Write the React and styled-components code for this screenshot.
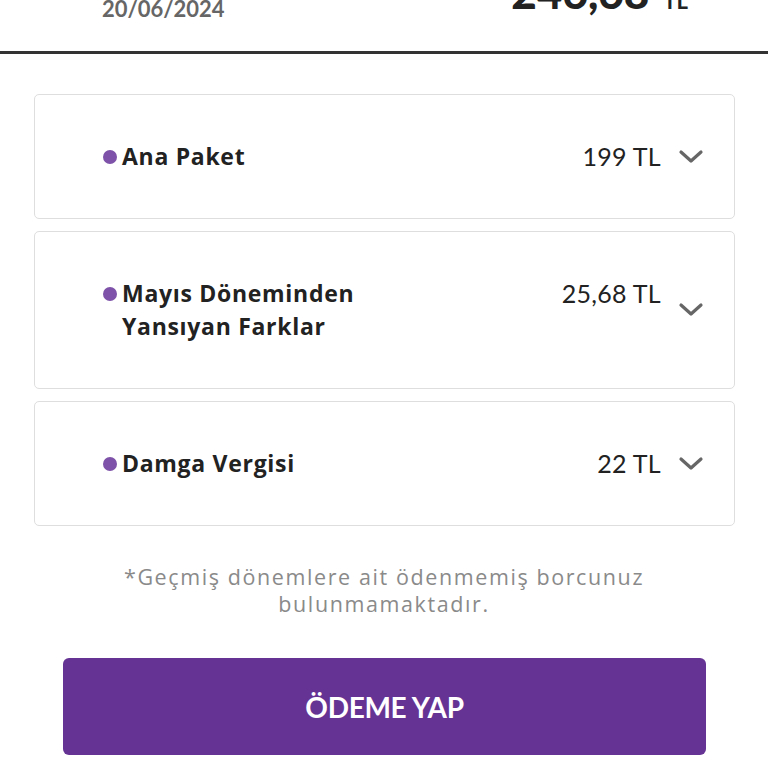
import React from 'react';
import styled, { createGlobalStyle } from 'styled-components';

const GlobalStyle = createGlobalStyle`
  html, body {
    margin: 0;
    padding: 0;
    background: #fff;
    font-family: Lato, "Noto Sans", sans-serif;
    overflow: hidden;
  }
`;

const Page = styled.div`
  width: 768px;
  height: 768px;
  overflow: hidden;
  display: flex;
  flex-direction: column;
`;

const Header = styled.div`
  margin-top: -40px;
  height: 94px;
  padding: 0 80px 0 102px;
  display: flex;
  justify-content: space-between;
  align-items: flex-start;
  border-bottom: 3px solid #333;
  box-sizing: border-box;
`;

const DateCol = styled.div`
  display: flex;
  flex-direction: column;
  padding-top: 36px;
`;

const DateText = styled.div`
  font-size: 22px;
  line-height: 26px;
  color: #666;
  font-weight: 700;
`;

const Total = styled.div`
  font-size: 44px;
  line-height: 52px;
  font-weight: 900;
  color: #222;
  padding-top: 6px;
  span {
    font-size: 22px;
    font-weight: 700;
    margin-left: 14px;
  }
`;

const List = styled.div`
  display: flex;
  flex-direction: column;
  gap: 12px;
  padding: 40px 33px 0 34px;
`;

const Card = styled.div`
  border: 1.5px solid #dedede;
  border-radius: 5px;
  padding: 45px 30px 45px 68px;
  display: flex;
  align-items: center;
  justify-content: space-between;
`;

const Label = styled.div`
  display: flex;
  align-items: flex-start;
  font-family: "Open Sans", Lato, sans-serif;
  font-size: 23px;
  line-height: 33px;
  font-weight: 700;
  color: #222;
  letter-spacing: 0.7px;
  max-width: 300px;
`;

const Dot = styled.span`
  flex: none;
  width: 14px;
  height: 14px;
  border-radius: 50%;
  background: #7d52a8;
  margin: 10px 5px 0 0;
`;

const Right = styled.div`
  display: flex;
  align-items: ${p => (p.$top ? 'flex-start' : 'center')};
  gap: 17px;
  align-self: stretch;
`;

const Amount = styled.div`
  font-size: 25px;
  line-height: 33px;
  color: #222;
  letter-spacing: 0.3px;
`;

const Chevron = styled.svg`
  width: 26px;
  height: 16px;
  align-self: center;
`;

const Note = styled.p`
  margin: 37px 0 0;
  text-align: center;
  font-family: "Open Sans", Lato, sans-serif;
  font-size: 21.5px;
  line-height: 27px;
  color: #8a8a8a;
  letter-spacing: 1.6px;
  padding: 0 90px;
`;

const PayButton = styled.button`
  margin: 41px 62px 0 63px;
  height: 97px;
  border: none;
  border-radius: 6px;
  background: #653393;
  color: #fff;
  font-family: Lato, "Noto Sans", sans-serif;
  font-size: 28px;
  font-weight: 700;
  letter-spacing: -0.3px;
`;

const items = [
  { label: 'Ana Paket', amount: '199 TL' },
  { label: 'Mayıs Döneminden Yansıyan Farklar', amount: '25,68 TL', top: true },
  { label: 'Damga Vergisi', amount: '22 TL' },
];

const ChevronDown = () => (
  <Chevron viewBox="0 0 26 16">
    <path d="M3 3 L13 12 L23 3" fill="none" stroke="#666" strokeWidth="3.2" strokeLinecap="round" strokeLinejoin="round" />
  </Chevron>
);

export default function App() {
  return (
    <Page>
      <GlobalStyle />
      <Header>
        <DateCol>
          <DateText>20/06/2024</DateText>
        </DateCol>
        <Total>
          246,68<span>TL</span>
        </Total>
      </Header>
      <List>
        {items.map(item => (
          <Card key={item.label}>
            <Label>
              <Dot />
              <span>{item.label}</span>
            </Label>
            <Right $top={item.top}>
              <Amount>{item.amount}</Amount>
              <ChevronDown />
            </Right>
          </Card>
        ))}
      </List>
      <Note>*Geçmiş dönemlere ait ödenmemiş borcunuz bulunmamaktadır.</Note>
      <PayButton>ÖDEME YAP</PayButton>
    </Page>
  );
}
